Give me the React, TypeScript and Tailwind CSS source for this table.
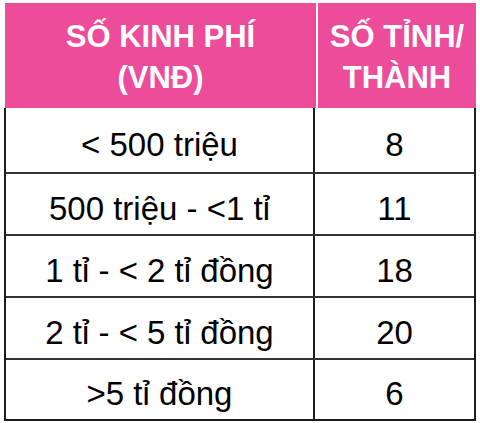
const rows: [string, string][] = [
  ['< 500 triệu', '8'],
  ['500 triệu - <1 tỉ', '11'],
  ['1 tỉ - < 2 tỉ đồng', '18'],
  ['2 tỉ - < 5 tỉ đồng', '20'],
  ['>5 tỉ đồng', '6'],
];

const heights = ['h-[64px]', 'h-[62px]', 'h-[62px]', 'h-[62px]', 'h-[61px]'];

export default function App() {
  return (
    <div className="w-[480px] h-[423px] bg-white pt-[3px] pl-[4px] font-['Liberation_Sans',Arial,sans-serif]">
      <div className="w-[472px]">
        <div className="grid grid-cols-[311px_2px_1fr] h-[105px] pl-[1px]">
          <div className="bg-[#ec4c99] flex items-center justify-center text-center text-white font-bold text-[31px] leading-[41px] pt-[3px]">
            SỐ KINH PHÍ
            <br />
            (VNĐ)
          </div>
          <div className="bg-white" />
          <div className="bg-[#ec4c99] flex items-center justify-center text-center text-white font-bold text-[31px] leading-[41px] pt-[3px]">
            SỐ TỈNH/
            <br />
            THÀNH
          </div>
        </div>
        <div className="border-l-2 border-r-2 border-b-2 border-[#1c1c1c]">
          {rows.map(([a, b], i) => (
            <div
              key={i}
              className={`grid grid-cols-[309px_1fr] ${heights[i]} ${i > 0 ? 'border-t-2 border-[#333]' : ''}`}
            >
              <div className="flex items-center justify-center border-r-2 border-[#1c1c1c] text-[33px] leading-none text-black pt-[8px]">
                {a}
              </div>
              <div className="flex items-center justify-center text-[33px] leading-none text-black pt-[8px]">{b}</div>
            </div>
          ))}
        </div>
      </div>
    </div>
  );
}
